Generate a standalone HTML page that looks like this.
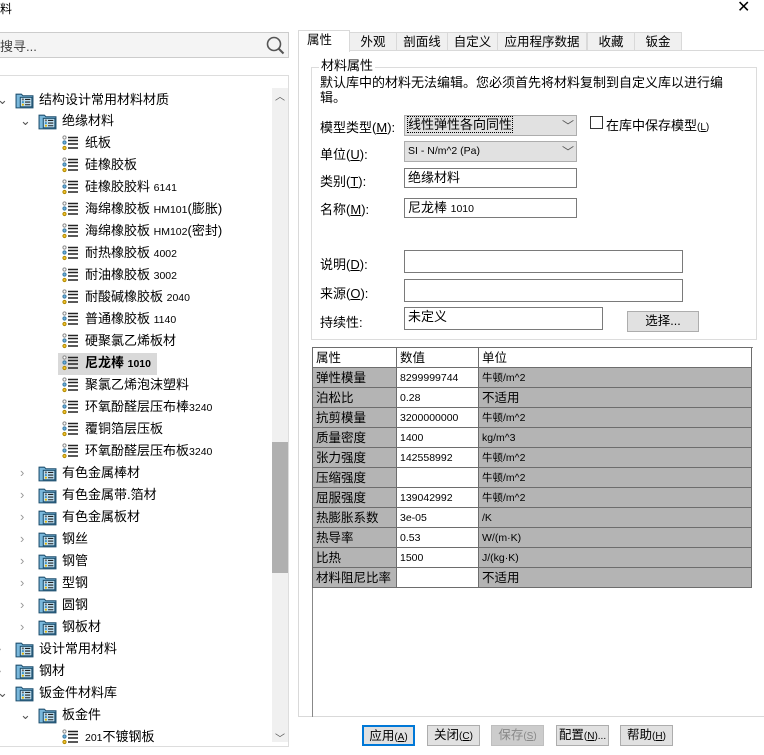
<!DOCTYPE html>
<html><head><meta charset="utf-8"><style>
*{margin:0;padding:0;box-sizing:border-box}
body{width:764px;height:755px;overflow:hidden;background:#fff;position:relative;font-family:"Liberation Sans","Noto Sans CJK SC",sans-serif;font-size:12px;color:#000}
.a{position:absolute;white-space:nowrap}
.lb{font-size:13px}
.r{position:absolute;height:22px;line-height:22px;white-space:nowrap;font-size:13px}
.r svg{position:absolute;top:3px}
.r span{position:absolute;top:0}
.sm{font-size:10.5px}
.box{position:absolute;border:1px solid #7a7a7a;background:#fff;padding-left:3px;line-height:18px;font-size:13px}
.cb{position:absolute;border:1px solid #adadad;background:#e1e1e1;padding-left:3px;line-height:18px;font-size:13px}
.btn{position:absolute;border:1px solid #adadad;background:#e1e1e1;text-align:center;line-height:18px;height:21px;font-size:12.5px}
table{border-collapse:collapse;position:absolute;left:312px;top:347px;width:440px}
td{border:1px solid #6d6d6d;height:20px;padding:0 3px;line-height:18px;background:#b4b4b4;font-size:12.5px}
td.v{background:#fff;font-size:10.5px}
td.u{font-size:10.5px}
.tab{position:absolute;top:32px;height:19px;border:1px solid #d9d9d9;background:#f0f0f0;line-height:18px;text-align:center;font-size:12.5px}
</style></head><body>
<svg width="0" height="0" style="position:absolute"><defs>
<symbol id="fo" viewBox="0 0 18 16"><path d="M1 2h5l1.5 1.5H17V15H1Z" fill="#7ab8dc" stroke="#1e4f6e"/><rect x="5" y="5" width="11" height="9" fill="#bfe0f2" stroke="#1e4f6e"/><circle cx="7.5" cy="7" r="1" fill="#666"/><circle cx="7.5" cy="9.5" r="1" fill="#3a8fc2"/><circle cx="7.5" cy="12" r="1" fill="#e0b000"/><path d="M9.5 7h5M9.5 9.5h5M9.5 12h5" stroke="#222"/></symbol>
<symbol id="li" viewBox="0 0 18 16"><circle cx="2.5" cy="2.5" r="1.6" fill="#fff" stroke="#888"/><circle cx="2.5" cy="7.5" r="1.6" fill="#6fb3dd" stroke="#3b7aa3"/><circle cx="2.5" cy="13" r="1.6" fill="#f2c12e" stroke="#b08a00"/><path d="M6 2.5h10M6 5.5h10M6 9h10M6 13h10" stroke="#222" stroke-width="1.6"/></symbol>
</defs></svg>
<div class="a" style="left:0;top:0;font-size:12px">料</div>
<div class="a" style="left:737px;top:-3px;font-size:16px">✕</div>
<div class="a" style="left:-2px;top:32px;width:291px;height:26px;border:1px solid #ccc;background:#f4f4f4"></div>
<div class="a" style="left:0;top:36px;font-size:13px;color:#444">搜寻...</div>
<svg class="a" style="left:265px;top:35px" width="22" height="20"><circle cx="9" cy="9" r="6.5" fill="none" stroke="#555" stroke-width="1.6"/><path d="M13.5 13.5l5 5" stroke="#555" stroke-width="2"/></svg>
<div class="a" style="left:-2px;top:75px;width:291px;height:672px;border:1px solid #ddd"></div>
<div class="a" style="left:272px;top:88px;width:16px;height:654px;background:#f0f0f0"></div>
<div class="a" style="left:272px;top:442px;width:16px;height:131px;background:#b0b0b0"></div>
<div class="a" style="left:275px;top:88px;font-size:10px;color:#555">︿</div>
<div class="a" style="left:275px;top:730px;font-size:10px;color:#555">﹀</div>
<div class="a" style="left:58px;top:353px;width:99px;height:22px;background:#d9d9d9"></div>
<div class="r" style="left:0;top:89px"><span style="left:-3px;color:#555">⌄</span><svg style="left:15px" width="19" height="17"><use href="#fo"/></svg><span style="left:39px">结构设计常用材料材质</span></div>
<div class="r" style="left:0;top:110px"><span style="left:20px;color:#555">⌄</span><svg style="left:38px" width="19" height="17"><use href="#fo"/></svg><span style="left:62px">绝缘材料</span></div>
<div class="r" style="left:0;top:132px"><svg style="left:62px" width="18" height="16"><use href="#li"/></svg><span style="left:85px">纸板</span></div>
<div class="r" style="left:0;top:154px"><svg style="left:62px" width="18" height="16"><use href="#li"/></svg><span style="left:85px">硅橡胶板</span></div>
<div class="r" style="left:0;top:176px"><svg style="left:62px" width="18" height="16"><use href="#li"/></svg><span style="left:85px">硅橡胶胶料 <span class="sm" style="position:static">6141</span></span></div>
<div class="r" style="left:0;top:198px"><svg style="left:62px" width="18" height="16"><use href="#li"/></svg><span style="left:85px">海绵橡胶板 <span class="sm" style="position:static">HM101</span>(膨胀)</span></div>
<div class="r" style="left:0;top:220px"><svg style="left:62px" width="18" height="16"><use href="#li"/></svg><span style="left:85px">海绵橡胶板 <span class="sm" style="position:static">HM102</span>(密封)</span></div>
<div class="r" style="left:0;top:242px"><svg style="left:62px" width="18" height="16"><use href="#li"/></svg><span style="left:85px">耐热橡胶板 <span class="sm" style="position:static">4002</span></span></div>
<div class="r" style="left:0;top:264px"><svg style="left:62px" width="18" height="16"><use href="#li"/></svg><span style="left:85px">耐油橡胶板 <span class="sm" style="position:static">3002</span></span></div>
<div class="r" style="left:0;top:286px"><svg style="left:62px" width="18" height="16"><use href="#li"/></svg><span style="left:85px">耐酸碱橡胶板 <span class="sm" style="position:static">2040</span></span></div>
<div class="r" style="left:0;top:308px"><svg style="left:62px" width="18" height="16"><use href="#li"/></svg><span style="left:85px">普通橡胶板 <span class="sm" style="position:static">1140</span></span></div>
<div class="r" style="left:0;top:330px"><svg style="left:62px" width="18" height="16"><use href="#li"/></svg><span style="left:85px">硬聚氯乙烯板材</span></div>
<div class="r" style="left:0;top:352px"><svg style="left:62px" width="18" height="16"><use href="#li"/></svg><span style="left:85px;font-weight:bold">尼龙棒 <span class="sm" style="position:static">1010</span></span></div>
<div class="r" style="left:0;top:374px"><svg style="left:62px" width="18" height="16"><use href="#li"/></svg><span style="left:85px">聚氯乙烯泡沫塑料</span></div>
<div class="r" style="left:0;top:396px"><svg style="left:62px" width="18" height="16"><use href="#li"/></svg><span style="left:85px">环氧酚醛层压布棒<span class="sm" style="position:static">3240</span></span></div>
<div class="r" style="left:0;top:418px"><svg style="left:62px" width="18" height="16"><use href="#li"/></svg><span style="left:85px">覆铜箔层压板</span></div>
<div class="r" style="left:0;top:440px"><svg style="left:62px" width="18" height="16"><use href="#li"/></svg><span style="left:85px">环氧酚醛层压布板<span class="sm" style="position:static">3240</span></span></div>
<div class="r" style="left:0;top:462px"><span style="left:20px;color:#999">›</span><svg style="left:38px" width="19" height="17"><use href="#fo"/></svg><span style="left:62px">有色金属棒材</span></div>
<div class="r" style="left:0;top:484px"><span style="left:20px;color:#999">›</span><svg style="left:38px" width="19" height="17"><use href="#fo"/></svg><span style="left:62px">有色金属带.箔材</span></div>
<div class="r" style="left:0;top:506px"><span style="left:20px;color:#999">›</span><svg style="left:38px" width="19" height="17"><use href="#fo"/></svg><span style="left:62px">有色金属板材</span></div>
<div class="r" style="left:0;top:528px"><span style="left:20px;color:#999">›</span><svg style="left:38px" width="19" height="17"><use href="#fo"/></svg><span style="left:62px">钢丝</span></div>
<div class="r" style="left:0;top:550px"><span style="left:20px;color:#999">›</span><svg style="left:38px" width="19" height="17"><use href="#fo"/></svg><span style="left:62px">钢管</span></div>
<div class="r" style="left:0;top:572px"><span style="left:20px;color:#999">›</span><svg style="left:38px" width="19" height="17"><use href="#fo"/></svg><span style="left:62px">型钢</span></div>
<div class="r" style="left:0;top:594px"><span style="left:20px;color:#999">›</span><svg style="left:38px" width="19" height="17"><use href="#fo"/></svg><span style="left:62px">圆钢</span></div>
<div class="r" style="left:0;top:616px"><span style="left:20px;color:#999">›</span><svg style="left:38px" width="19" height="17"><use href="#fo"/></svg><span style="left:62px">钢板材</span></div>
<div class="r" style="left:0;top:638px"><span style="left:-3px;color:#999">›</span><svg style="left:15px" width="19" height="17"><use href="#fo"/></svg><span style="left:39px">设计常用材料</span></div>
<div class="r" style="left:0;top:660px"><span style="left:-3px;color:#999">›</span><svg style="left:15px" width="19" height="17"><use href="#fo"/></svg><span style="left:39px">钢材</span></div>
<div class="r" style="left:0;top:682px"><span style="left:-3px;color:#555">⌄</span><svg style="left:15px" width="19" height="17"><use href="#fo"/></svg><span style="left:39px">钣金件材料库</span></div>
<div class="r" style="left:0;top:704px"><span style="left:20px;color:#555">⌄</span><svg style="left:38px" width="19" height="17"><use href="#fo"/></svg><span style="left:62px">板金件</span></div>
<div class="r" style="left:0;top:726px"><svg style="left:62px" width="18" height="16"><use href="#li"/></svg><span style="left:85px"><span class="sm" style="position:static">201</span>不镀钢板</span></div>
<div class="a" style="left:298px;top:50px;width:470px;height:667px;border:1px solid #d9d9d9"></div>
<div class="tab" style="left:349px;width:48px">外观</div>
<div class="tab" style="left:396px;width:52px">剖面线</div>
<div class="tab" style="left:447px;width:51px">自定义</div>
<div class="tab" style="left:497px;width:90px">应用程序数据</div>
<div class="tab" style="left:587px;width:48px">收藏</div>
<div class="tab" style="left:634px;width:48px">钣金</div>
<div class="tab" style="left:298px;top:30px;width:52px;height:22px;background:#fff;border-bottom:none;text-align:left;padding-left:8px">属性</div>
<div class="a" style="left:311px;top:67px;width:446px;height:273px;border:1px solid #dcdcdc"></div>
<div class="a" style="left:319px;top:58px;background:#fff;padding:0 2px;font-size:13px;line-height:15px">材料属性</div>
<div class="a" style="left:320px;top:75px;font-size:13px;line-height:15px;white-space:normal;width:410px">默认库中的材料无法编辑。您必须首先将材料复制到自定义库以进行编辑。</div>
<div class="a lb" style="left:320px;top:117px">模型类型(<u>M</u>):</div>
<div class="cb" style="left:404px;top:115px;width:173px;height:21px"><span style="outline:1px dotted #000">线性弹性各向同性</span></div>
<div class="a" style="left:562px;top:117px;color:#555">﹀</div>
<div class="a" style="left:590px;top:116px;width:13px;height:13px;border:1px solid #333"></div>
<div class="a" style="left:606px;top:115px;font-size:13px">在库中保存模型<span style="font-size:10px">(<u>L</u>)</span></div>
<div class="a lb" style="left:320px;top:144px">单位(<u>U</u>):</div>
<div class="cb" style="left:404px;top:141px;width:173px;height:21px;font-size:10.5px">SI - N/m^2 (Pa)</div>
<div class="a" style="left:562px;top:143px;color:#555">﹀</div>
<div class="a lb" style="left:320px;top:171px">类别(<u>T</u>):</div>
<div class="box" style="left:404px;top:168px;width:173px;height:20px">绝缘材料</div>
<div class="a lb" style="left:320px;top:199px">名称(<u>M</u>):</div>
<div class="box" style="left:404px;top:198px;width:173px;height:20px">尼龙棒 <span class="sm">1010</span></div>
<div class="a lb" style="left:320px;top:254px">说明(<u>D</u>):</div>
<div class="box" style="left:404px;top:250px;width:279px;height:23px"></div>
<div class="a lb" style="left:320px;top:283px">来源(<u>O</u>):</div>
<div class="box" style="left:404px;top:279px;width:279px;height:23px"></div>
<div class="a lb" style="left:320px;top:312px">持续性:</div>
<div class="box" style="left:404px;top:307px;width:199px;height:23px">未定义</div>
<div class="btn" style="left:627px;top:311px;width:72px">选择...</div>
<div class="a" style="left:312px;top:347px;width:441px;height:370px;border-left:1px solid #888;border-top:1px solid #888"></div>
<table>
<tr><td style="background:#fff;width:84px">属性</td><td style="background:#fff;width:82px">数值</td><td style="background:#fff">单位</td></tr>
<tr><td>弹性模量</td><td class="v">8299999744</td><td class="u">牛顿/m^2</td></tr>
<tr><td>泊松比</td><td class="v">0.28</td><td>不适用</td></tr>
<tr><td>抗剪模量</td><td class="v">3200000000</td><td class="u">牛顿/m^2</td></tr>
<tr><td>质量密度</td><td class="v">1400</td><td class="u">kg/m^3</td></tr>
<tr><td>张力强度</td><td class="v">142558992</td><td class="u">牛顿/m^2</td></tr>
<tr><td>压缩强度</td><td class="v"></td><td class="u">牛顿/m^2</td></tr>
<tr><td>屈服强度</td><td class="v">139042992</td><td class="u">牛顿/m^2</td></tr>
<tr><td>热膨胀系数</td><td class="v">3e-05</td><td class="u">/K</td></tr>
<tr><td>热导率</td><td class="v">0.53</td><td class="u">W/(m·K)</td></tr>
<tr><td>比热</td><td class="v">1500</td><td class="u">J/(kg·K)</td></tr>
<tr><td>材料阻尼比率</td><td class="v"></td><td>不适用</td></tr>
</table>
<div class="btn" style="left:362px;top:725px;width:53px;border:2px solid #0078d7">应用<span style="font-size:10px">(<u>A</u>)</span></div>
<div class="btn" style="left:427px;top:725px;width:53px">关闭<span style="font-size:10px">(<u>C</u>)</span></div>
<div class="btn" style="left:491px;top:725px;width:53px;background:#ccc;color:#888;border-color:#bfbfbf">保存<span style="font-size:10px">(<u>S</u>)</span></div>
<div class="btn" style="left:556px;top:725px;width:53px">配置<span style="font-size:10px">(<u>N</u>)...</span></div>
<div class="btn" style="left:620px;top:725px;width:53px">帮助<span style="font-size:10px">(<u>H</u>)</span></div>
</body></html>
